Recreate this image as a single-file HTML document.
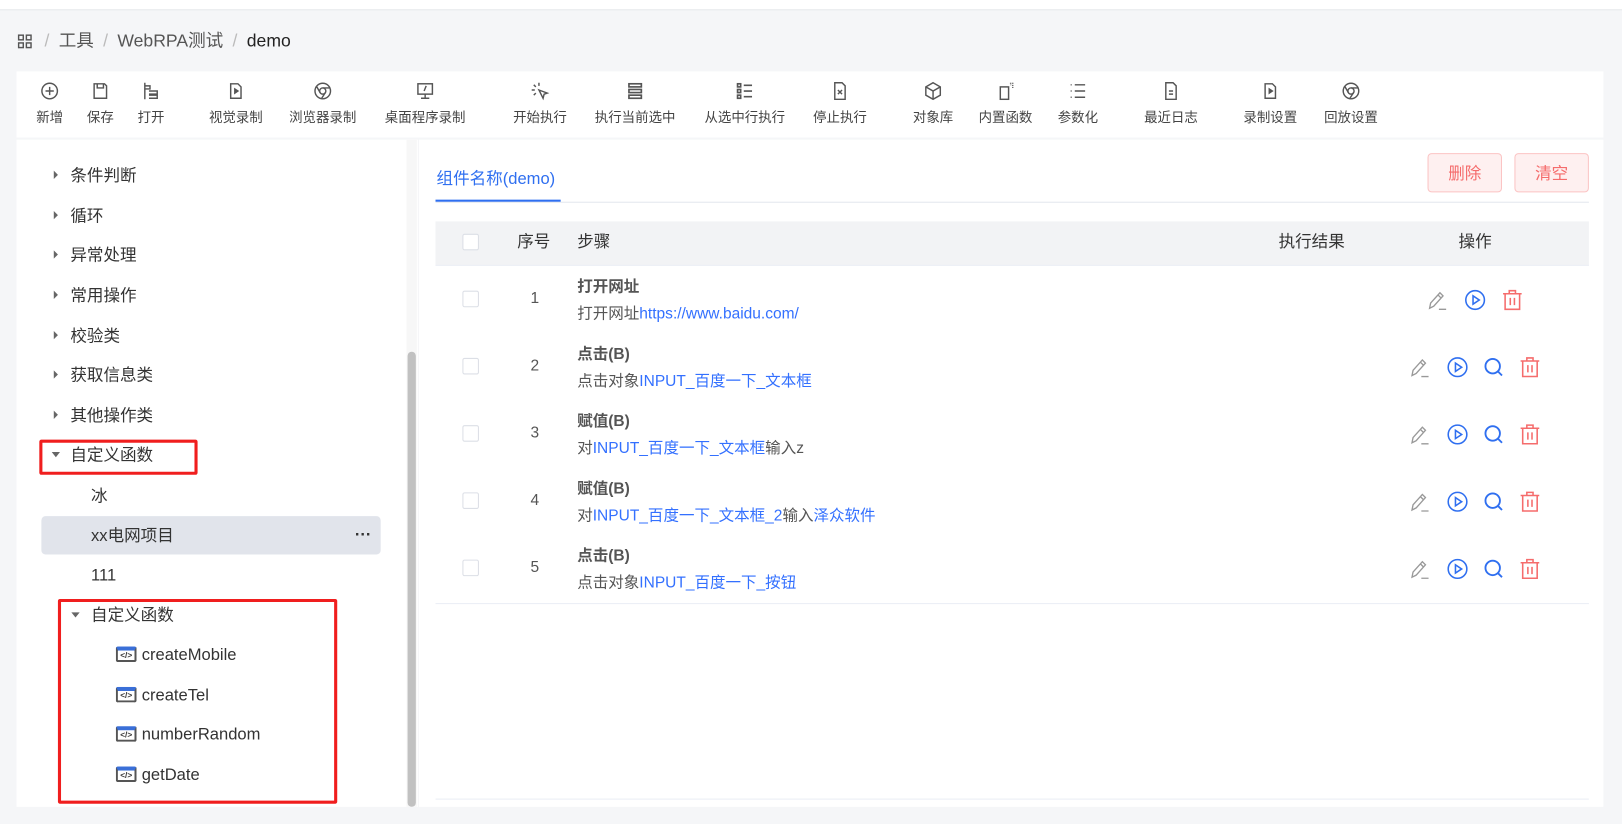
<!DOCTYPE html>
<html><head><meta charset="utf-8"><style>
*{margin:0;padding:0;box-sizing:border-box}
html,body{width:1622px;height:824px;overflow:hidden;background:#f5f6f8}
#w{position:absolute;left:0;top:0;width:1568px;height:797px;transform:scale(1.03444);transform-origin:0 0;font-family:"Liberation Sans","Noto Sans CJK SC",sans-serif;color:#333}
.a{position:absolute;white-space:nowrap}
.tb{position:absolute;top:69px;left:16px;width:1534px;height:64px;background:#fff}
.ti{position:absolute;top:10px;width:100px;margin-left:-50px;text-align:center;font-size:13px;color:#444;line-height:17px}
.ti svg{display:block;margin:0 auto 8px;width:18px;height:18px}
.tr{position:absolute;font-size:16px;color:#333;line-height:20px;white-space:nowrap;padding-top:2px}
.tri{position:absolute;width:0;height:0;border-left:4px solid #666;border-top:4px solid transparent;border-bottom:4px solid transparent}
.trd{position:absolute;width:0;height:0;border-top:5px solid #666;border-left:4px solid transparent;border-right:4px solid transparent}
.fi{position:absolute;width:20px;height:15px;border:2px solid #555;border-top:4px solid #3a6fd8;border-radius:2px;font-size:8px;line-height:9px;text-align:center;color:#333;font-weight:bold}
.cb{position:absolute;left:447px;width:16px;height:16px;border:1px solid #dcdfe6;border-radius:2px;background:#fff}
.t1{position:absolute;left:558px;font-size:15px;font-weight:bold;color:#555;line-height:20px;white-space:nowrap;padding-top:3px}
.t2{position:absolute;left:558px;font-size:15px;color:#555;line-height:20px;white-space:nowrap;padding-top:3px}
.t2 b{font-weight:normal;color:#3370ff}
.n{position:absolute;left:507px;width:20px;text-align:center;font-size:15px;color:#555;line-height:20px}
.bc{position:absolute;left:17px;top:30px;height:20px;display:flex;align-items:center;font-size:17px;line-height:20px;color:#555}
.bc .s{color:#bbb;margin:0 9px}
</style></head><body><div id="w">
<div class="a" style="left:0;top:0;width:1568px;height:10px;background:#fff;border-bottom:1px solid #e4e6ea"></div>
<div class="bc">
<svg width="14" height="14" viewBox="0 0 14 14" fill="none" stroke="#555" stroke-width="1.4" style="margin-right:3px"><rect x="1" y="1" width="4.5" height="4.5"/><rect x="8.5" y="1" width="4.5" height="4.5"/><rect x="1" y="8.5" width="4.5" height="4.5"/><rect x="8.5" y="8.5" width="4.5" height="4.5"/></svg>
<span class="s">/</span><span>工具</span><span class="s">/</span><span>WebRPA测试</span><span class="s">/</span><span style="color:#222">demo</span>
</div>

<div class="tb">
<div class="ti" style="left:32px"><svg viewBox="0 0 18 18" fill="none" stroke="#555" stroke-width="1.4"><circle cx="9" cy="9" r="7.5"/><path d="M9 5v8M5 9h8"/></svg>新增</div>
<div class="ti" style="left:81px"><svg viewBox="0 0 18 18" fill="none" stroke="#555" stroke-width="1.4"><path d="M3 2h10l2 2v12H3z"/><path d="M6 2v4h6V2"/></svg>保存</div>
<div class="ti" style="left:130px"><svg viewBox="0 0 18 18" fill="none" stroke="#555" stroke-width="1.4"><path d="M3 1v16M3 4h5v3H3M7 9h8v3H7M7 13h8v3H7"/></svg>打开</div>
<div class="ti" style="left:212px"><svg viewBox="0 0 18 18" fill="none" stroke="#555" stroke-width="1.4"><path d="M4 2h7l3 3v11H4z"/><path d="M8 7l3 2-3 2z" fill="#555"/></svg>视觉录制</div>
<div class="ti" style="left:296px"><svg viewBox="0 0 18 18" fill="none" stroke="#555" stroke-width="1.4"><circle cx="9" cy="9" r="7.5"/><circle cx="9" cy="9" r="3"/><path d="M9 6h7M6.5 10.5L3 4.5M11.5 10.5L8 16"/></svg>浏览器录制</div>
<div class="ti" style="left:395px"><svg viewBox="0 0 18 18" fill="none" stroke="#555" stroke-width="1.4"><rect x="2" y="2" width="14" height="10"/><path d="M9 12v4M5 16h8M8 9l2-5"/></svg>桌面程序录制</div>
<div class="ti" style="left:506px"><svg viewBox="0 0 18 18" fill="none" stroke="#555" stroke-width="1.4"><path d="M8 1v3M3 3l2 2M1 8h3M3 13l2-2M8 8l8 3-3 1-1 4z"/></svg>开始执行</div>
<div class="ti" style="left:598px"><svg viewBox="0 0 18 18" fill="none" stroke="#555" stroke-width="1.6"><rect x="3" y="2" width="12" height="3"/><rect x="3" y="7.5" width="12" height="3"/><rect x="3" y="13" width="12" height="3"/></svg>执行当前选中</div>
<div class="ti" style="left:704px"><svg viewBox="0 0 18 18" fill="none" stroke="#555" stroke-width="1.6"><rect x="2" y="2" width="3" height="3"/><rect x="2" y="7.5" width="3" height="3"/><rect x="2" y="13" width="3" height="3"/><path d="M8 3.5h8M8 9h8M8 14.5h8"/></svg>从选中行执行</div>
<div class="ti" style="left:796px"><svg viewBox="0 0 18 18" fill="none" stroke="#555" stroke-width="1.4"><path d="M4 1h7l3 3v13H4z"/><path d="M7 8l4 4M11 8l-4 4"/></svg>停止执行</div>
<div class="ti" style="left:886px"><svg viewBox="0 0 18 18" fill="none" stroke="#555" stroke-width="1.4"><path d="M9 1l7 4v8l-7 4-7-4V5zM2 5l7 4 7-4M9 9v8"/></svg>对象库</div>
<div class="ti" style="left:956px"><svg viewBox="0 0 18 18" fill="none" stroke="#555" stroke-width="1.4"><rect x="4" y="5" width="8" height="12"/><path d="M14 1v1M16 1v1M16 3v1M16 5v1M14 3h.5" /></svg>内置函数</div>
<div class="ti" style="left:1026px"><svg viewBox="0 0 18 18" fill="none" stroke="#555" stroke-width="1.4"><path d="M2 3h1M2 9h1M2 15h1M6 3h10M6 9h10M6 15h10"/></svg>参数化</div>
<div class="ti" style="left:1116px"><svg viewBox="0 0 18 18" fill="none" stroke="#555" stroke-width="1.4"><path d="M4 1h7l3 3v13H4z"/><path d="M7 9h4M7 12h4"/></svg>最近日志</div>
<div class="ti" style="left:1212px"><svg viewBox="0 0 18 18" fill="none" stroke="#555" stroke-width="1.4"><path d="M4 2h7l3 3v11H4z"/><path d="M8 7l3 2-3 2z" fill="#555"/></svg>录制设置</div>
<div class="ti" style="left:1290px"><svg viewBox="0 0 18 18" fill="none" stroke="#555" stroke-width="1.4"><circle cx="9" cy="9" r="7.5"/><circle cx="9" cy="9" r="3"/><path d="M9 6h7M6.5 10.5L3 4.5M11.5 10.5L8 16"/></svg>回放设置</div>
</div>

<!-- left panel -->
<div class="a" style="left:16px;top:135px;width:388px;height:645px;background:#fff;overflow:hidden">
<div class="a" style="left:377px;top:0;width:10px;height:645px;background:#f7f7f7"></div>
<div class="a" style="left:378px;top:205px;width:8px;height:440px;background:#c1c1c1;border-radius:4px"></div>
</div>
<div class="tri" style="left:52px;top:165px"></div><div class="tr" style="left:68px;top:159px">条件判断</div>
<div class="tri" style="left:52px;top:204px"></div><div class="tr" style="left:68px;top:198px">循环</div>
<div class="tri" style="left:52px;top:242px"></div><div class="tr" style="left:68px;top:236px">异常处理</div>
<div class="tri" style="left:52px;top:281px"></div><div class="tr" style="left:68px;top:275px">常用操作</div>
<div class="tri" style="left:52px;top:320px"></div><div class="tr" style="left:68px;top:314px">校验类</div>
<div class="tri" style="left:52px;top:358px"></div><div class="tr" style="left:68px;top:352px">获取信息类</div>
<div class="tri" style="left:52px;top:397px"></div><div class="tr" style="left:68px;top:391px">其他操作类</div>
<div class="trd" style="left:50px;top:437px"></div><div class="tr" style="left:68px;top:429px">自定义函数</div>
<div class="a" style="left:38px;top:425px;width:153px;height:34px;border:3px solid #f01e1e;border-radius:2px"></div>
<div class="tr" style="left:88px;top:469px">冰</div>
<div class="a" style="left:40px;top:499px;width:328px;height:37px;background:#e1e4eb;border-radius:4px"></div>
<div class="tr" style="left:88px;top:507px">xx电网项目</div>
<div class="a" style="left:343px;top:508px;font-size:16px;line-height:20px;color:#333;font-weight:bold">···</div>
<div class="tr" style="left:88px;top:545px">111</div>
<div class="trd" style="left:69px;top:592px"></div><div class="tr" style="left:88px;top:584px">自定义函数</div>
<div class="fi" style="left:112px;top:625px">&lt;/&gt;</div><div class="tr" style="left:137px;top:622px">createMobile</div>
<div class="fi" style="left:112px;top:664px">&lt;/&gt;</div><div class="tr" style="left:137px;top:661px">createTel</div>
<div class="fi" style="left:112px;top:702px">&lt;/&gt;</div><div class="tr" style="left:137px;top:699px">numberRandom</div>
<div class="fi" style="left:112px;top:741px">&lt;/&gt;</div><div class="tr" style="left:137px;top:738px">getDate</div>
<div class="a" style="left:56px;top:579px;width:270px;height:198px;border:3px solid #f01e1e;border-radius:2px"></div>

<!-- right panel -->
<div class="a" style="left:405px;top:135px;width:1145px;height:645px;background:#fff"></div>
<div class="a" style="left:422px;top:164px;font-size:16px;line-height:20px;color:#2f6ff0">组件名称(demo)</div>
<div class="a" style="left:421px;top:195px;width:1115px;height:1px;background:#e4e7ed"></div>
<div class="a" style="left:421px;top:193px;width:121px;height:2px;background:#2f6ff0"></div>
<div class="a" style="left:1380px;top:148px;width:72px;height:38px;background:#fef0f0;border:1px solid #fbc4c4;border-radius:4px;color:#f56c6c;font-size:16px;text-align:center;line-height:38px;padding-top:1px">删除</div>
<div class="a" style="left:1464px;top:148px;width:72px;height:38px;background:#fef0f0;border:1px solid #fbc4c4;border-radius:4px;color:#f56c6c;font-size:16px;text-align:center;line-height:38px;padding-top:1px">清空</div>
<div class="a" style="left:421px;top:214px;width:1115px;height:43px;background:#f2f3f5;border-bottom:1px solid #ebeef5"></div>
<div class="cb" style="top:226px"></div>
<div class="a" style="left:500px;top:225px;font-size:16px;line-height:20px;color:#333">序号</div>
<div class="a" style="left:558px;top:225px;font-size:16px;line-height:20px;color:#333">步骤</div>
<div class="a" style="left:1236px;top:225px;font-size:16px;line-height:20px;color:#333">执行结果</div>
<div class="a" style="left:1410px;top:225px;font-size:16px;line-height:20px;color:#333">操作</div>

<div class="cb" style="top:281px"></div><div class="n" style="top:279px">1</div>
<div class="t1" style="top:265px">打开网址</div><div class="t2" style="top:291px">打开网址<b>https://www.baidu.com/</b></div>
<div class="cb" style="top:346px"></div><div class="n" style="top:344px">2</div>
<div class="t1" style="top:330px">点击(B)</div><div class="t2" style="top:356px">点击对象<b>INPUT_百度一下_文本框</b></div>
<div class="cb" style="top:411px"></div><div class="n" style="top:409px">3</div>
<div class="t1" style="top:395px">赋值(B)</div><div class="t2" style="top:421px">对<b>INPUT_百度一下_文本框</b>输入z</div>
<div class="cb" style="top:476px"></div><div class="n" style="top:474px">4</div>
<div class="t1" style="top:460px">赋值(B)</div><div class="t2" style="top:486px">对<b>INPUT_百度一下_文本框_2</b>输入<b>泽众软件</b></div>
<div class="cb" style="top:541px"></div><div class="n" style="top:539px">5</div>
<div class="t1" style="top:525px">点击(B)</div><div class="t2" style="top:551px">点击对象<b>INPUT_百度一下_按钮</b></div>
<div class="a" style="left:421px;top:583px;width:1115px;height:1px;background:#ebeef5"></div>
<div class="a" style="left:421px;top:772px;width:1115px;height:1px;background:#ebeef5"></div>

<svg class="a" style="left:0;top:0" width="1568" height="797">
<defs>
<g id="ed" fill="none" stroke="#999" stroke-width="1.3"><path d="M2 18l1-5 9-10 3 3-9 10z M10 5l3 3 M11 19h7"/></g>
<g id="pl" fill="none" stroke="#2f6ff0" stroke-width="1.5"><circle cx="10" cy="10" r="9"/><path d="M8 6v8l6-4z"/></g>
<g id="sr" fill="none" stroke="#2f6ff0" stroke-width="1.8"><circle cx="9" cy="9" r="7"/><path d="M14 14l4 4"/></g>
<g id="dl" fill="none" stroke="#f56c6c" stroke-width="1.5"><path d="M1 4h18M7 4V1h6v3M3 4v15h14V4M8 8v7M12 8v7"/></g>
</defs>
<use href="#ed" x="1380" y="280"/><use href="#pl" x="1416" y="280"/><use href="#dl" x="1452" y="280"/>
<use href="#ed" x="1363" y="345"/><use href="#pl" x="1399" y="345"/><use href="#sr" x="1434" y="345"/><use href="#dl" x="1469" y="345"/>
<use href="#ed" x="1363" y="410"/><use href="#pl" x="1399" y="410"/><use href="#sr" x="1434" y="410"/><use href="#dl" x="1469" y="410"/>
<use href="#ed" x="1363" y="475"/><use href="#pl" x="1399" y="475"/><use href="#sr" x="1434" y="475"/><use href="#dl" x="1469" y="475"/>
<use href="#ed" x="1363" y="540"/><use href="#pl" x="1399" y="540"/><use href="#sr" x="1434" y="540"/><use href="#dl" x="1469" y="540"/>
</svg>
</div></body></html>
